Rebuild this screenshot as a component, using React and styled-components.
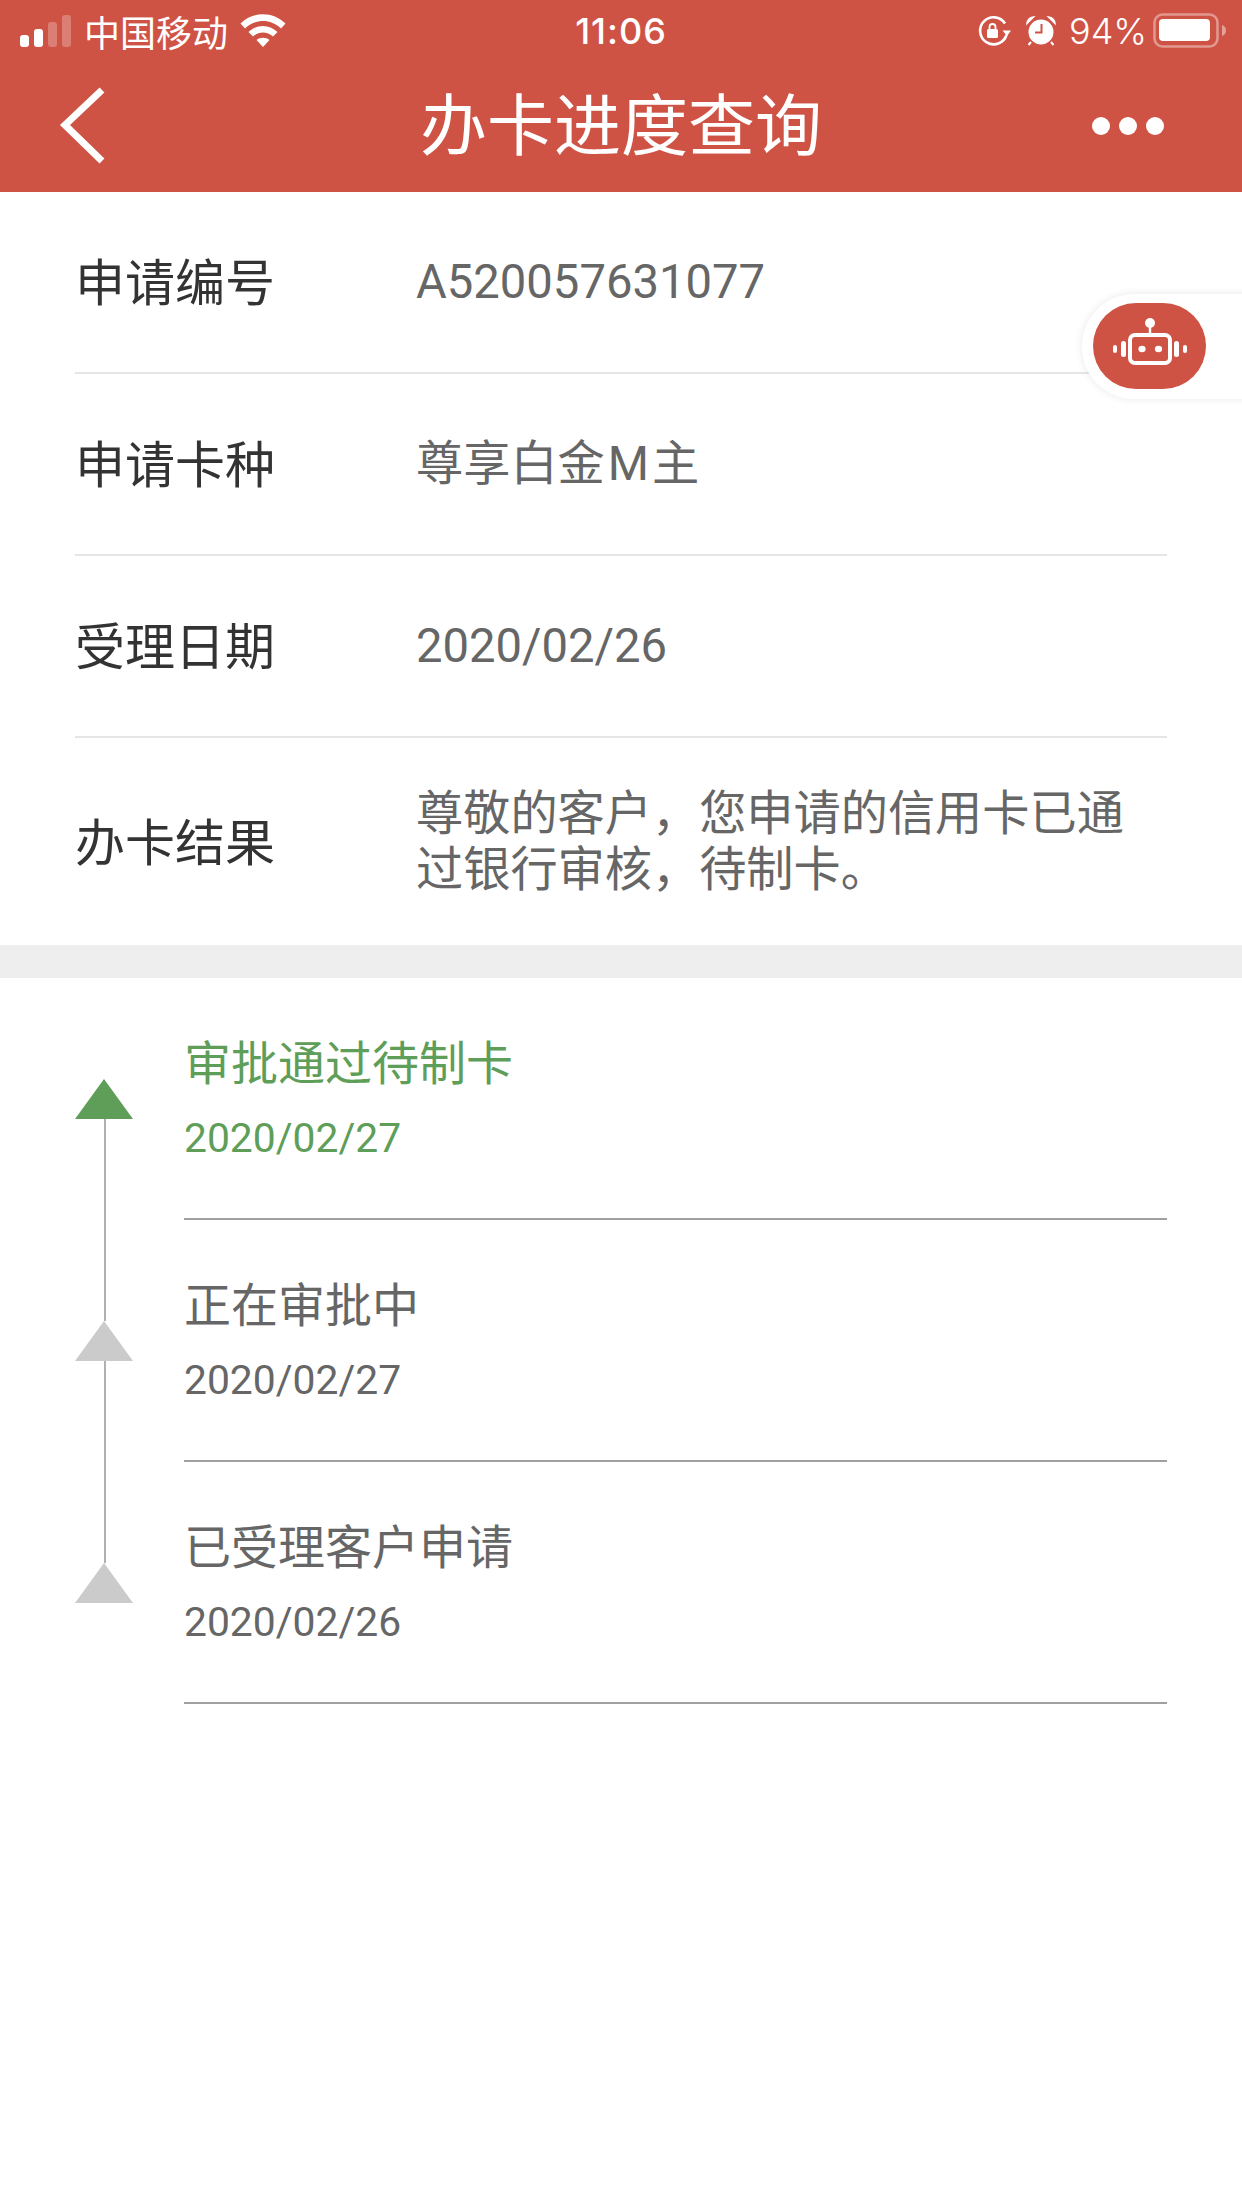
import React from "react";
import styled, { createGlobalStyle } from "styled-components";

const RED = "#cf5345";
const GREEN = "#5e9e58";

const Global = createGlobalStyle`
  html, body { margin: 0; padding: 0; background: #fff; }
  body { font-family: Roboto, "Noto Sans CJK SC", sans-serif; }
`;

const Page = styled.div`
  position: relative;
  width: 1242px;
  height: 2208px;
  overflow: hidden;
  background: #fff;
`;

const Top = styled.header`
  height: 192px;
  background: ${RED};
  color: #fff;
  font-family: Inter, "Noto Sans CJK SC", sans-serif;
`;

const StatusBar = styled.div`
  height: 62px;
  display: grid;
  grid-template-columns: 1fr auto 1fr;
  align-items: center;
  font-size: 36px;
`;

const StatusLeft = styled.div`
  display: flex;
  align-items: center;
  padding-left: 20px;
  gap: 12px;
`;

const StatusRight = styled.div`
  display: flex;
  align-items: center;
  justify-content: flex-end;
  gap: 16px;
  padding-right: 15px;
`;

const Clock = styled.span`
  font-weight: 500;
  font-size: 36px;
  letter-spacing: 1px;
`;

const Percent = styled.span`
  margin-left: -3px;
  margin-right: -10px;
  font-size: 36px;
  font-weight: 300;
`;

const LockIcon = styled.svg`
  margin-right: -2px;
`;

const NavBar = styled.div`
  height: 130px;
  display: grid;
  grid-template-columns: 180px 1fr 180px;
  align-items: center;
`;

const NavTitle = styled.h1`
  margin: 0 0 14px;
  text-align: center;
  font-size: 67px;
  font-weight: 400;
`;

const BackIcon = styled.svg`
  display: block;
  margin-left: 57px;
`;

const Dots = styled.div`
  display: flex;
  gap: 9px;
  padding-left: 30px;
  margin-bottom: 3px;
`;

const Dot = styled.i`
  width: 18px;
  height: 18px;
  border-radius: 50%;
  background: #fff;
`;

const InfoList = styled.section`
  padding: 0 75px;
`;

const InfoRow = styled.div`
  height: ${(p) => p.$height}px;
  box-sizing: border-box;
  display: grid;
  grid-template-columns: 341px 1fr;
  align-items: center;
  border-bottom: ${(p) => (p.$last ? "none" : "2px solid #e5e5e5")};
`;

const Label = styled.span`
  font-size: 50px;
  color: #333;
  transform: translateY(-3px);
`;

const Value = styled.span`
  font-size: 47.2px;
  line-height: 56px;
  color: #666;
`;

const CardLetter = styled.span`
  display: inline-block;
  width: 1em;
  text-align: center;
`;

const Band = styled.div`
  height: 33px;
  background: #eeeeee;
`;

const Timeline = styled.ol`
  list-style: none;
  margin: 0;
  padding: 0 75px;
`;

const Step = styled.li`
  position: relative;
  height: 242px;
  box-sizing: border-box;
  margin-left: 109px;
  padding-top: 56px;
  border-bottom: 2px solid #a0a0a0;
  color: ${(p) => (p.$active ? GREEN : "#666")};
`;

const Triangle = styled.span`
  position: absolute;
  left: -109px;
  top: 101px;
  width: 0;
  height: 0;
  border-left: 29px solid transparent;
  border-right: 29px solid transparent;
  border-bottom: 40px solid ${(p) => (p.$active ? GREEN : "#cbcbcb")};
`;

const Connector = styled.span`
  position: absolute;
  left: -80px;
  top: 141px;
  width: 2px;
  height: 202px;
  background: #b0b0b0;
`;

const StepTitle = styled.div`
  font-size: 47px;
  line-height: 60px;
`;

const StepDate = styled.div`
  margin-top: 20px;
  font-size: 40.8px;
  line-height: 48px;
`;

const RobotTab = styled.div`
  position: absolute;
  left: 1082px;
  top: 294px;
  width: 180px;
  height: 105px;
  box-sizing: border-box;
  padding: 9px 0 0 11px;
  border-radius: 52px 0 0 52px;
  background: #fff;
  box-shadow: 0 0 8px rgba(0, 0, 0, 0.09);
`;

const RobotButton = styled.div`
  width: 113px;
  height: 86px;
  border-radius: 43px;
  background: ${RED};
  display: flex;
  align-items: center;
  justify-content: center;
`;

const steps = [
  { title: "审批通过待制卡", date: "2020/02/27", active: true },
  { title: "正在审批中", date: "2020/02/27" },
  { title: "已受理客户申请", date: "2020/02/26" },
];

const Signal = () => (
  <svg width="52" height="34" viewBox="0 0 52 34" fill="#fff">
    <rect x="0" y="21" width="9" height="12" rx="3" />
    <rect x="14" y="15" width="9" height="18" rx="3" />
    <rect x="28" y="8" width="9" height="25" rx="3" opacity="0.25" />
    <rect x="42" y="1" width="9" height="32" rx="3" opacity="0.25" />
  </svg>
);

const Wifi = () => (
  <svg width="46" height="34" viewBox="0 0 46 34" fill="#fff">
    <path d="M0.5 9.5C13 -3 33 -3 45.5 9.5L41 14.5C31 4.5 15 4.5 5 14.5Z" />
    <path d="M8.5 18C17 10 29 10 37.5 18L33 22.5C27 17 19 17 13 22.5Z" />
    <path d="M16.5 26C20 23 26 23 29.5 26L23 33Z" />
  </svg>
);

const RotationLock = () => (
  <LockIcon width="34" height="30" viewBox="0 0 34 30" fill="none">
    <path d="M28.5 19A13.5 13.5 0 1 1 27 7.500" stroke="#fff" strokeWidth="2.6" />
    <path d="M24.5 14.5H33L29 20Z" fill="#fff" />
    <rect x="9" y="13" width="11" height="9" rx="1.5" fill="#fff" />
    <path d="M11.5 13V11a3 3 0 0 1 6 0V13" stroke="#fff" strokeWidth="1.8" />
  </LockIcon>
);

const Alarm = () => (
  <svg width="30" height="30" viewBox="0 0 30 30" fill="none">
    <circle cx="15" cy="16" r="12.5" fill="#fff" />
    <path d="M1 7.5C1.5 3.5 4 1.5 7.5 1L1 7.5Z M29 7.5C28.5 3.5 26 1.5 22.5 1L29 7.5Z" fill="#fff" stroke="#fff" strokeWidth="1.5" />
    <path d="M5 26L2.5 29M25 26L27.5 29" stroke="#fff" strokeWidth="2" />
    <path d="M15.5 8V16.5H9" stroke={RED} strokeWidth="2" />
  </svg>
);

const Battery = () => (
  <svg width="74" height="36" viewBox="0 0 74 36" fill="none">
    <rect x="1.5" y="1.5" width="63" height="32" rx="8" stroke="#fff" strokeOpacity="0.4" strokeWidth="2.6" />
    <rect x="6" y="6" width="51" height="22" rx="4" fill="#fff" />
    <path d="M69 12C72 13 73 15 73 17.500C73 20 72 22 69 23Z" fill="#fff" fillOpacity="0.45" />
  </svg>
);

const Robot = () => (
  <svg width="76" height="58" viewBox="0 0 76 58" fill="none">
    <circle cx="38" cy="6" r="5" fill="#fff" />
    <path d="M38 10V18" stroke="#fff" strokeWidth="2.4" />
    <rect x="18" y="18" width="40" height="28" rx="5" stroke="#fff" strokeWidth="4" />
    <ellipse cx="30" cy="32" rx="3.600" ry="3.200" fill="#fff" />
    <ellipse cx="46.500" cy="32" rx="3.600" ry="3.200" fill="#fff" />
    <rect x="9" y="24" width="5" height="16" rx="2.500" fill="#fff" />
    <rect x="62" y="24" width="5" height="16" rx="2.500" fill="#fff" />
    <rect x="1" y="28" width="4" height="8" rx="2" fill="#fff" />
    <rect x="71" y="28" width="4" height="8" rx="2" fill="#fff" />
  </svg>
);

export default function App() {
  return (
    <Page>
      <Global />
      <Top>
        <StatusBar>
          <StatusLeft>
            <Signal />
            <span>中国移动</span>
            <Wifi />
          </StatusLeft>
          <Clock>11:06</Clock>
          <StatusRight>
            <RotationLock />
            <Alarm />
            <Percent>94%</Percent>
            <Battery />
          </StatusRight>
        </StatusBar>
        <NavBar>
          <BackIcon width="50" height="80" viewBox="0 0 50 80" fill="none">
            <path d="M45 3L8 38L45 74" stroke="#fff" strokeWidth="7" />
          </BackIcon>
          <NavTitle>办卡进度查询</NavTitle>
          <Dots>
            <Dot />
            <Dot />
            <Dot />
          </Dots>
        </NavBar>
      </Top>

      <InfoList>
        <InfoRow $height={182}>
          <Label>申请编号</Label>
          <Value>A520057631077</Value>
        </InfoRow>
        <InfoRow $height={182}>
          <Label>申请卡种</Label>
          <Value>尊享白金<CardLetter>M</CardLetter>主</Value>
        </InfoRow>
        <InfoRow $height={182}>
          <Label>受理日期</Label>
          <Value>2020/02/26</Value>
        </InfoRow>
        <InfoRow $height={207} $last>
          <Label>办卡结果</Label>
          <Value>尊敬的客户，您申请的信用卡已通过银行审核，待制卡。</Value>
        </InfoRow>
      </InfoList>

      <Band />

      <Timeline>
        {steps.map((step, i) => (
          <Step key={step.title} $active={step.active}>
            <Triangle $active={step.active} />
            {i < steps.length - 1 && <Connector />}
            <StepTitle>{step.title}</StepTitle>
            <StepDate>{step.date}</StepDate>
          </Step>
        ))}
      </Timeline>

      <RobotTab>
        <RobotButton>
          <Robot />
        </RobotButton>
      </RobotTab>
    </Page>
  );
}
